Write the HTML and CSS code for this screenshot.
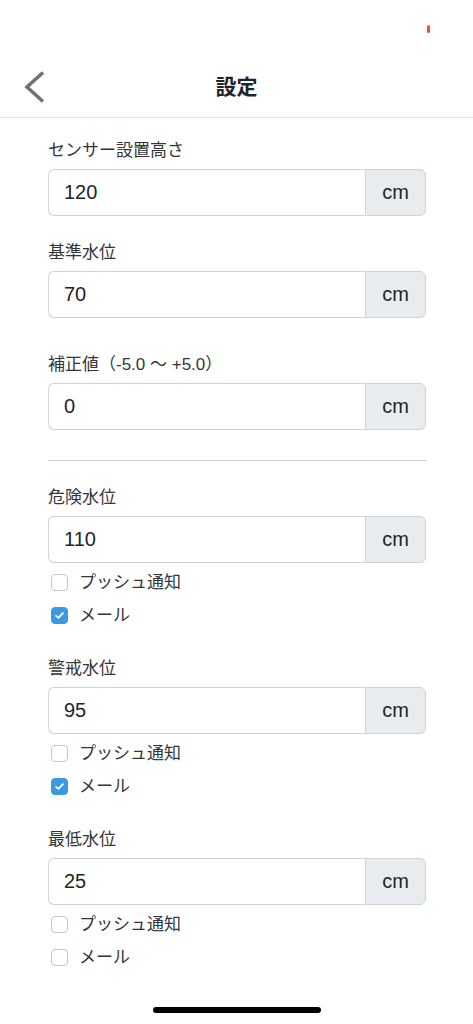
FILE: index.html
```html
<!DOCTYPE html>
<html lang="ja">
<head>
<meta charset="utf-8">
<meta name="viewport" content="width=device-width, initial-scale=1">
<title>設定</title>
<link rel="stylesheet" href="styles.css">
</head>
<body>
<div class="status-bar"><span class="rec-dot"></span></div>
<header class="nav">
  <div class="nav-left">
    <svg class="back" width="24" height="36" viewBox="0 0 24 36" aria-hidden="true">
      <polyline points="19,3.5 3,18 19,32.5" fill="none" stroke="#6c737a" stroke-width="3.6" stroke-linejoin="miter"/>
    </svg>
  </div>
  <h1 class="nav-title">設定</h1>
  <div class="nav-right"></div>
</header>
<main class="content">
  <section class="field g1">
    <div class="label">センサー設置高さ</div>
    <div class="input-group"><div class="control">120</div><div class="addon">cm</div></div>
  </section>
  <section class="field g2">
    <div class="label">基準水位</div>
    <div class="input-group"><div class="control">70</div><div class="addon">cm</div></div>
  </section>
  <section class="field g3">
    <div class="label">補正値（-5.0 〜 +5.0）</div>
    <div class="input-group"><div class="control">0</div><div class="addon">cm</div></div>
  </section>
  <hr class="divider">
  <section class="field g4">
    <div class="label">危険水位</div>
    <div class="input-group"><div class="control">110</div><div class="addon">cm</div></div>
    <div class="checks">
      <div class="check"><span class="box"></span><span class="check-label">プッシュ通知</span></div>
      <div class="check"><span class="box on"><svg viewBox="0 0 16 16" width="11" height="11"><polyline points="3,8.5 6.5,11.5 13,4.5" fill="none" stroke="#fff" stroke-width="2.6" stroke-linecap="round" stroke-linejoin="round"/></svg></span><span class="check-label">メール</span></div>
    </div>
  </section>
  <section class="field g5">
    <div class="label">警戒水位</div>
    <div class="input-group"><div class="control">95</div><div class="addon">cm</div></div>
    <div class="checks">
      <div class="check"><span class="box"></span><span class="check-label">プッシュ通知</span></div>
      <div class="check"><span class="box on"><svg viewBox="0 0 16 16" width="11" height="11"><polyline points="3,8.5 6.5,11.5 13,4.5" fill="none" stroke="#fff" stroke-width="2.6" stroke-linecap="round" stroke-linejoin="round"/></svg></span><span class="check-label">メール</span></div>
    </div>
  </section>
  <section class="field g6">
    <div class="label">最低水位</div>
    <div class="input-group"><div class="control">25</div><div class="addon">cm</div></div>
    <div class="checks">
      <div class="check"><span class="box"></span><span class="check-label">プッシュ通知</span></div>
      <div class="check"><span class="box"></span><span class="check-label">メール</span></div>
    </div>
  </section>
</main>
<div class="home-row"><span class="home-indicator"></span></div>
</body>
</html>
```
FILE: styles.css
```css
* { box-sizing: border-box; }
html, body { margin: 0; padding: 0; background: #fff; }
body {
  font-family: "Liberation Sans", "Noto Sans CJK JP", sans-serif;
  color: #212529;
  width: 473px;
  overflow: hidden;
}
.status-bar {
  height: 56px;
  display: flex;
  justify-content: flex-end;
  align-items: flex-start;
  padding: 25px 43px 0 0;
}
.rec-dot {
  width: 3px;
  height: 8px;
  border-radius: 2px;
  background: #e9513d;
}
.nav {
  height: 62px;
  display: grid;
  grid-template-columns: 1fr auto 1fr;
  align-items: center;
  border-bottom: 1px solid #e4e4e8;
}
.nav-left { display: flex; align-items: center; padding-left: 24px; padding-top: 1px; }
.back { display: block; }
.nav-title {
  margin: 0 0 4px;
  font-size: 21px;
  font-weight: 700;
  line-height: 30px;
  color: #212529;
  font-family: "Noto Sans CJK JP", sans-serif;
}
.content {
  padding: 21px 47px 0 48px;
}
.field { display: flex; flex-direction: column; }
.g1, .g4, .g5 { margin-bottom: 25px; }
.g2 { margin-bottom: 35px; }
.label {
  font-size: 17px;
  line-height: 24px;
  margin-bottom: 6px;
  color: #333639;
}
.input-group {
  display: flex;
  height: 47px;
}
.control {
  flex: 1;
  border: 1px solid #ced4da;
  border-right: 0;
  border-radius: 6px 0 0 6px;
  padding: 0 15px;
  font-size: 20px;
  line-height: 45px;
  color: #212529;
}
.addon {
  width: 61px;
  border: 1px solid #ced4da;
  border-radius: 0 6px 6px 0;
  background: #e9ecef;
  font-size: 20px;
  line-height: 45px;
  text-align: center;
  color: #212529;
}
.divider {
  margin: 30px 0 25px;
  border: 0;
  border-top: 1px solid #cfcfcf;
  height: 0;
}
.checks { margin-top: 3px; display: flex; flex-direction: column; }
.check {
  height: 33px;
  display: flex;
  align-items: center;
  gap: 11px;
  padding-left: 3px;
}
.box {
  width: 17px;
  height: 17px;
  border: 1px solid #c4c4c4;
  border-radius: 4px;
  background: #fff;
  display: flex;
  align-items: center;
  justify-content: center;
}
.box.on {
  background: #3b98e1;
  border-color: #3b98e1;
}
.box svg { display: block; }
.check-label {
  font-size: 17px;
  line-height: 24px;
  color: #333639;
}
.home-row {
  display: flex;
  justify-content: center;
  padding-top: 33px;
}
.home-indicator {
  width: 168px;
  height: 6px;
  border-radius: 3px;
  background: #000;
}
```
